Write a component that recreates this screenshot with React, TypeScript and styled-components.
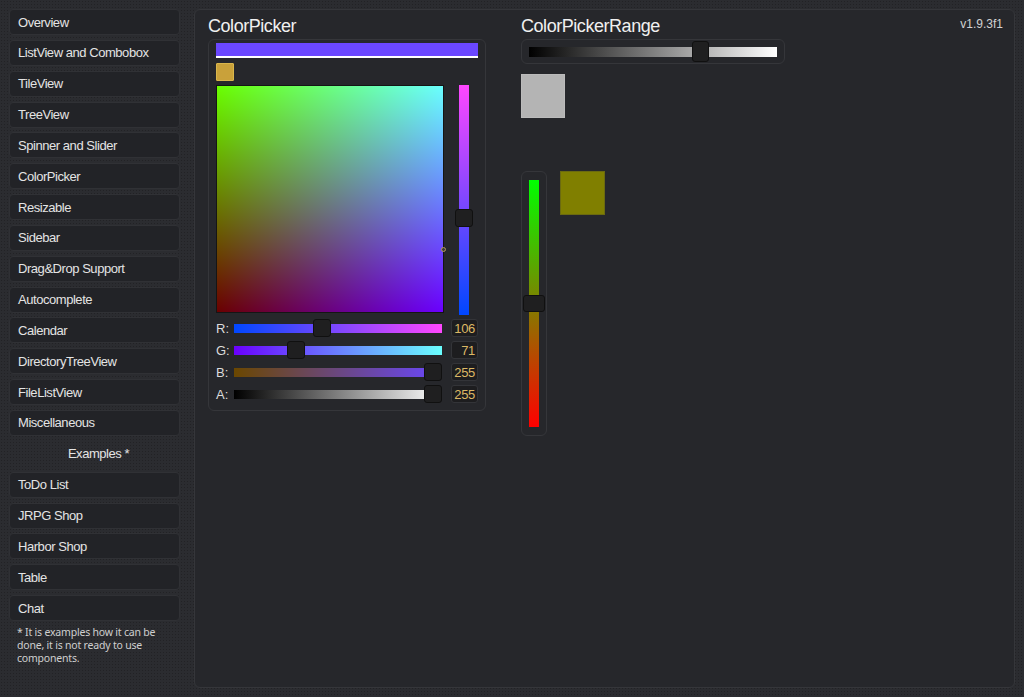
import styled, { createGlobalStyle } from "styled-components";

const GlobalStyle = createGlobalStyle`
  html, body {
    margin: 0;
    padding: 0;
    background: #2b2c30;
  }

  * {
    box-sizing: border-box;
  }
`;

const Page = styled.div`
  display: flex;
  gap: 14px;
  width: 1024px;
  height: 697px;
  padding: 9px;
  background-color: #2b2c30;
  background-image: radial-gradient(circle, rgba(0, 0, 0, 0.22) 0.8px, transparent 1px);
  background-size: 3px 3px;
  font-family: "Liberation Sans", Arial, sans-serif;
  color: #e6e6e6;
`;

const Sidebar = styled.nav`
  display: flex;
  flex-direction: column;
  gap: 4.85px;
  width: 171px;
  flex-shrink: 0;
`;

const NavButton = styled.div`
  height: 26px;
  display: flex;
  align-items: center;
  padding-left: 8px;
  background: #222327;
  border: 1px solid #303135;
  border-radius: 4px;
  font-size: 13px;
  letter-spacing: -0.45px;
  color: #e4e4e4;
`;

const SectionLabel = styled.div`
  height: 26px;
  display: flex;
  align-items: center;
  justify-content: center;
  padding-left: 8px;
  font-size: 13px;
  letter-spacing: -0.45px;
  color: #e4e4e4;
`;

const Note = styled.p`
  margin: 0;
  padding: 0 6px 0 8px;
  font-family: "Noto Sans", sans-serif;
  font-size: 10.5px;
  line-height: 13px;
  letter-spacing: -0.2px;
  color: #cfcfcf;
`;

const Main = styled.main`
  flex: 1;
  display: flex;
  gap: 35px;
  padding: 5px 11px 0 13px;
  background: #26272b;
  border: 1px solid #35363a;
  border-radius: 6px;
`;

const Column = styled.section<{ $width: number }>`
  display: flex;
  flex-direction: column;
  width: ${(p) => p.$width}px;
`;

const Title = styled.h2`
  margin: 0 0 2px;
  font-size: 18px;
  font-weight: normal;
  line-height: 22px;
  letter-spacing: -0.45px;
  color: #f0f0f0;
`;

const Version = styled.div`
  margin-left: auto;
  margin-top: 2px;
  font-size: 12px;
  line-height: 14px;
  color: #d2d2d2;
`;

const Panel = styled.div`
  display: flex;
  flex-direction: column;
  padding: 3px 7px 7px;
  border: 1px solid #35363a;
  border-radius: 6px;
`;

const Preview = styled.div<{ $color: string }>`
  height: 15px;
  background: ${(p) => p.$color};
  border-bottom: 2px solid #ffffff;
`;

const Swatch = styled.div<{ $color: string; $size: number }>`
  width: ${(p) => p.$size}px;
  height: ${(p) => p.$size}px;
  background: ${(p) => p.$color};
  border: 1px solid rgba(255, 255, 255, 0.1);
`;

const SmallSwatch = styled(Swatch)`
  margin-top: 5px;
  border-color: #d9b64c;
  border-radius: 1px;
`;

const PickArea = styled.div`
  display: flex;
  gap: 11px;
  margin-top: 4px;
`;

const Square = styled.div`
  position: relative;
  width: 228px;
  height: 228px;
  border: 1px solid #151515;
  background-color: rgb(106, 0, 0);
  background-image: linear-gradient(to right, rgb(0, 0, 0), rgb(0, 0, 255)),
    linear-gradient(to top, rgb(0, 0, 0), rgb(0, 255, 0));
  background-blend-mode: lighten;
`;

const Marker = styled.span`
  position: absolute;
  width: 5px;
  height: 5px;
  margin: -2.5px 0 0 -2.5px;
  border: 1px solid #b59a5a;
  border-radius: 50%;
  background: #3a3a3a;
`;

const VSlot = styled.div<{ $width: number; $height: number }>`
  position: relative;
  display: flex;
  justify-content: center;
  width: ${(p) => p.$width}px;
  height: ${(p) => p.$height}px;
`;

const VBar = styled.div<{ $gradient: string }>`
  width: 10px;
  height: 100%;
  background: ${(p) => p.$gradient};
`;

const VThumb = styled.div<{ $w: number; $h: number }>`
  position: absolute;
  left: 50%;
  width: ${(p) => p.$w}px;
  height: ${(p) => p.$h}px;
  margin-left: ${(p) => -p.$w / 2}px;
  background: #1f1f20;
  border: 1px solid #101010;
  border-radius: 3px;
`;

const Rows = styled.div`
  display: flex;
  flex-direction: column;
  gap: 4px;
  margin-top: 4px;
`;

const Row = styled.div`
  display: grid;
  grid-template-columns: 18px 1fr 27px;
  align-items: center;
  height: 18px;
`;

const RowLabel = styled.span`
  font-size: 13px;
  color: #dcdcdc;
`;

const HSlot = styled.div<{ $height: number }>`
  position: relative;
  display: flex;
  align-items: center;
  height: ${(p) => p.$height}px;
`;

const HBar = styled.div<{ $gradient: string; $thickness: number }>`
  width: 100%;
  height: ${(p) => p.$thickness}px;
  background: ${(p) => p.$gradient};
`;

const HThumb = styled.div<{ $w: number; $h: number }>`
  position: absolute;
  top: 50%;
  width: ${(p) => p.$w}px;
  height: ${(p) => p.$h}px;
  margin-top: ${(p) => -p.$h / 2}px;
  background: #1f1f20;
  border: 1px solid #101010;
  border-radius: 3px;
`;

const TrackCell = styled.div`
  margin-right: 9px;
`;

const ValueBox = styled.div`
  height: 18px;
  padding-right: 2px;
  text-align: right;
  font-size: 13px;
  line-height: 17px;
  letter-spacing: -0.3px;
  color: #dcb865;
  background: #1d1d1f;
  border: 1px solid #333438;
  border-radius: 3px;
`;

const RangeBox = styled.div`
  display: flex;
  align-items: center;
  height: 25px;
  padding: 0 7px;
  border: 1px solid #35363a;
  border-radius: 6px;
`;

const RangeTrack = styled.div`
  flex: 1;
`;

const GraySwatch = styled(Swatch)`
  margin-top: 10px;
`;

const VerticalGroup = styled.div`
  display: flex;
  align-items: flex-start;
  gap: 13px;
  margin-top: 53px;
`;

const VRangeBox = styled.div`
  padding: 8px 7px;
  border: 1px solid #35363a;
  border-radius: 6px;
`;

const OliveSwatch = styled(Swatch)`
  width: 45px;
  border-color: #6b6a10;
`;

const color = { r: 106, g: 71, b: 255, a: 255 };

const channels = [
  { label: "R:", value: color.r, gradient: `linear-gradient(to right, rgb(0,71,255), rgb(255,71,255))` },
  { label: "G:", value: color.g, gradient: `linear-gradient(to right, rgb(106,0,255), rgb(106,255,255))` },
  { label: "B:", value: color.b, gradient: `linear-gradient(to right, rgb(106,71,0), rgb(106,71,255))` },
  { label: "A:", value: color.a, gradient: `linear-gradient(to right, #000000, #ffffff)` },
];

const menu = [
  "Overview",
  "ListView and Combobox",
  "TileView",
  "TreeView",
  "Spinner and Slider",
  "ColorPicker",
  "Resizable",
  "Sidebar",
  "Drag&Drop Support",
  "Autocomplete",
  "Calendar",
  "DirectoryTreeView",
  "FileListView",
  "Miscellaneous",
];

const examples = ["ToDo List", "JRPG Shop", "Harbor Shop", "Table", "Chat"];

function HSlider({
  t,
  gradient,
  thickness,
  thumbW,
  thumbH,
}: {
  t: number;
  gradient: string;
  thickness: number;
  thumbW: number;
  thumbH: number;
}) {
  return (
    <HSlot $height={thumbH}>
      <HBar $gradient={gradient} $thickness={thickness} />
      <HThumb $w={thumbW} $h={thumbH} style={{ left: `calc((100% - ${thumbW}px) * ${t})` }} />
    </HSlot>
  );
}

function VSlider({
  t,
  gradient,
  width,
  height,
  thumbW,
  thumbH,
}: {
  t: number;
  gradient: string;
  width: number;
  height: number;
  thumbW: number;
  thumbH: number;
}) {
  return (
    <VSlot $width={width} $height={height}>
      <VBar $gradient={gradient} />
      <VThumb $w={thumbW} $h={thumbH} style={{ top: (height - thumbH) * (1 - t) }} />
    </VSlot>
  );
}

export default function App() {
  return (
    <>
      <GlobalStyle />
      <Page>
        <Sidebar>
          {menu.map((m) => (
            <NavButton key={m}>{m}</NavButton>
          ))}
          <SectionLabel>Examples *</SectionLabel>
          {examples.map((m) => (
            <NavButton key={m}>{m}</NavButton>
          ))}
          <Note>* It is examples how it can be done, it is not ready to use components.</Note>
        </Sidebar>

        <Main>
          <Column $width={278}>
            <Title>ColorPicker</Title>
            <Panel>
              <Preview $color="rgb(106, 71, 255)" />
              <SmallSwatch $color="#c9a13a" $size={18} />
              <PickArea>
                <Square>
                  <Marker style={{ left: `${(color.b / 255) * 100}%`, top: `${(1 - color.g / 255) * 100}%` }} />
                </Square>
                <VSlider
                  t={color.r / 255}
                  gradient="linear-gradient(to bottom, rgb(255,71,255), rgb(0,71,255))"
                  width={18}
                  height={230}
                  thumbW={18}
                  thumbH={18}
                />
              </PickArea>
              <Rows>
                {channels.map((c) => (
                  <Row key={c.label}>
                    <RowLabel>{c.label}</RowLabel>
                    <TrackCell>
                      <HSlider t={c.value / 255} gradient={c.gradient} thickness={9} thumbW={18} thumbH={18} />
                    </TrackCell>
                    <ValueBox>{c.value}</ValueBox>
                  </Row>
                ))}
              </Rows>
            </Panel>
          </Column>

          <Column $width={264}>
            <Title>ColorPickerRange</Title>
            <RangeBox>
              <RangeTrack>
                <HSlider
                  t={0.705}
                  gradient="linear-gradient(to right, #000000, #ffffff)"
                  thickness={10}
                  thumbW={17}
                  thumbH={21}
                />
              </RangeTrack>
            </RangeBox>
            <GraySwatch $color="#b4b4b4" $size={44} />
            <VerticalGroup>
              <VRangeBox>
                <VSlider
                  t={0.5}
                  gradient="linear-gradient(to bottom, #00ff00, #808000 50%, #ff0000)"
                  width={10}
                  height={247}
                  thumbW={22}
                  thumbH={17}
                />
              </VRangeBox>
              <OliveSwatch $color="#807f00" $size={44} />
            </VerticalGroup>
          </Column>

          <Version>v1.9.3f1</Version>
        </Main>
      </Page>
    </>
  );
}
